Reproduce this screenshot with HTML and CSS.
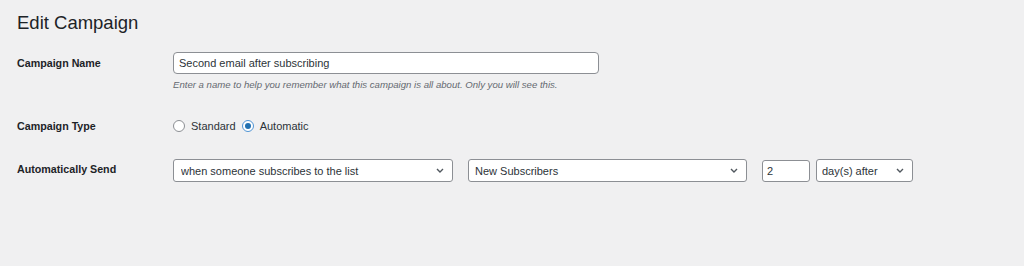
FILE: index.html
```html
<!DOCTYPE html>
<html lang="en">
<head>
<meta charset="utf-8">
<title>Edit Campaign</title>
<link rel="stylesheet" href="styles.css">
</head>
<body>
<div class="wrap">
  <h1 class="title">Edit Campaign</h1>
  <div class="form">
    <div class="row row-name">
      <label class="label" for="cname">Campaign Name</label>
      <div class="field">
        <input id="cname" class="text-input" type="text" value="Second email after subscribing">
        <p class="help">Enter a name to help you remember what this campaign is all about. Only you will see this.</p>
      </div>
    </div>
    <div class="row row-type">
      <span class="label">Campaign Type</span>
      <div class="field radios">
        <label class="radio"><input type="radio" name="ctype"><span>Standard</span></label>
        <label class="radio"><input type="radio" name="ctype" checked><span>Automatic</span></label>
      </div>
    </div>
    <div class="row row-send">
      <span class="label">Automatically Send</span>
      <div class="field controls">
        <div class="select sel-event">
          <select><option>when someone subscribes to the list</option></select>
          <svg class="chev" viewBox="0 0 8 5" width="8" height="5"><path d="M1 1l3 3 3-3" fill="none" stroke="#50575e" stroke-width="1.4"/></svg>
        </div>
        <div class="select sel-list">
          <select><option>New Subscribers</option></select>
          <svg class="chev" viewBox="0 0 8 5" width="8" height="5"><path d="M1 1l3 3 3-3" fill="none" stroke="#50575e" stroke-width="1.4"/></svg>
        </div>
        <div class="delay">
          <input class="num-input" type="text" value="2">
          <div class="select sel-unit">
            <select><option>day(s) after</option></select>
            <svg class="chev" viewBox="0 0 8 5" width="8" height="5"><path d="M1 1l3 3 3-3" fill="none" stroke="#50575e" stroke-width="1.4"/></svg>
          </div>
        </div>
      </div>
    </div>
  </div>
</div>
</body>
</html>
```

FILE: styles.css
```css
html, body {
  margin: 0;
  padding: 0;
  background: #f0f0f1;
  color: #1d2327;
  font-family: "Liberation Sans", Arial, sans-serif;
}

.wrap {
  padding: 11px 0 0 17px;
}

.title {
  margin: 0;
  font-size: 18.5px;
  font-weight: 400;
  line-height: 23px;
  color: #1d2327;
}

.form {
  display: flex;
  flex-direction: column;
  padding-top: 18px;
}

.row {
  display: grid;
  grid-template-columns: 156px 1fr;
  align-items: start;
}

.row-type {
  margin-top: 24px;
}

.row-send {
  margin-top: 21px;
}

.label {
  font-size: 10.7px;
  font-weight: 700;
  line-height: 22px;
  color: #1d2327;
}

.field {
  display: flex;
  flex-direction: column;
}

.text-input {
  box-sizing: border-box;
  width: 426px;
  height: 22px;
  margin: 0;
  padding: 0 5px;
  border: 1px solid #8c8f94;
  border-radius: 4px;
  background: #fff;
  font-family: inherit;
  font-size: 11px;
  color: #2c3338;
  outline: none;
}

.help {
  margin: 4px 0 0;
  font-size: 9.6px;
  font-style: italic;
  line-height: 13px;
  color: #646970;
}

.radios {
  flex-direction: row;
  align-items: center;
  height: 22px;
  gap: 6px;
}

.radio {
  display: flex;
  align-items: center;
  gap: 6px;
  font-size: 11px;
  color: #2c3338;
}

.radio input {
  appearance: none;
  -webkit-appearance: none;
  box-sizing: border-box;
  width: 12px;
  height: 12px;
  margin: 0;
  border: 1px solid #8c8f94;
  border-radius: 50%;
  background: #fff;
  display: grid;
  place-content: center;
}

.radio input:checked {
  border-color: #4f94d4;
}

.radio input:checked::before {
  content: "";
  width: 6px;
  height: 6px;
  border-radius: 50%;
  background: #2271b1;
}

.controls {
  flex-direction: row;
  align-items: center;
  gap: 15px;
  padding-top: 1px;
}

.select {
  position: relative;
  display: flex;
}

.select select {
  appearance: none;
  -webkit-appearance: none;
  box-sizing: border-box;
  width: 100%;
  height: 23px;
  margin: 0;
  padding: 0 20px 0 7px;
  border: 1px solid #8c8f94;
  border-radius: 3px;
  background: #fff;
  font-family: inherit;
  font-size: 11px;
  color: #2c3338;
  outline: none;
}

.chev {
  position: absolute;
  right: 9px;
  top: 9px;
  pointer-events: none;
}

.sel-event {
  width: 280px;
}

.sel-list {
  width: 279px;
}

.sel-list select {
  padding-left: 6px;
}

.delay {
  display: flex;
  align-items: center;
  gap: 6px;
}

.num-input {
  box-sizing: border-box;
  width: 48px;
  height: 22px;
  margin: 0;
  padding: 0 4px;
  border: 1px solid #8c8f94;
  border-radius: 3px;
  background: #fff;
  font-family: inherit;
  font-size: 11px;
  color: #2c3338;
  outline: none;
}

.sel-unit {
  width: 97px;
}

.sel-unit select {
  padding-left: 5px;
}
```
